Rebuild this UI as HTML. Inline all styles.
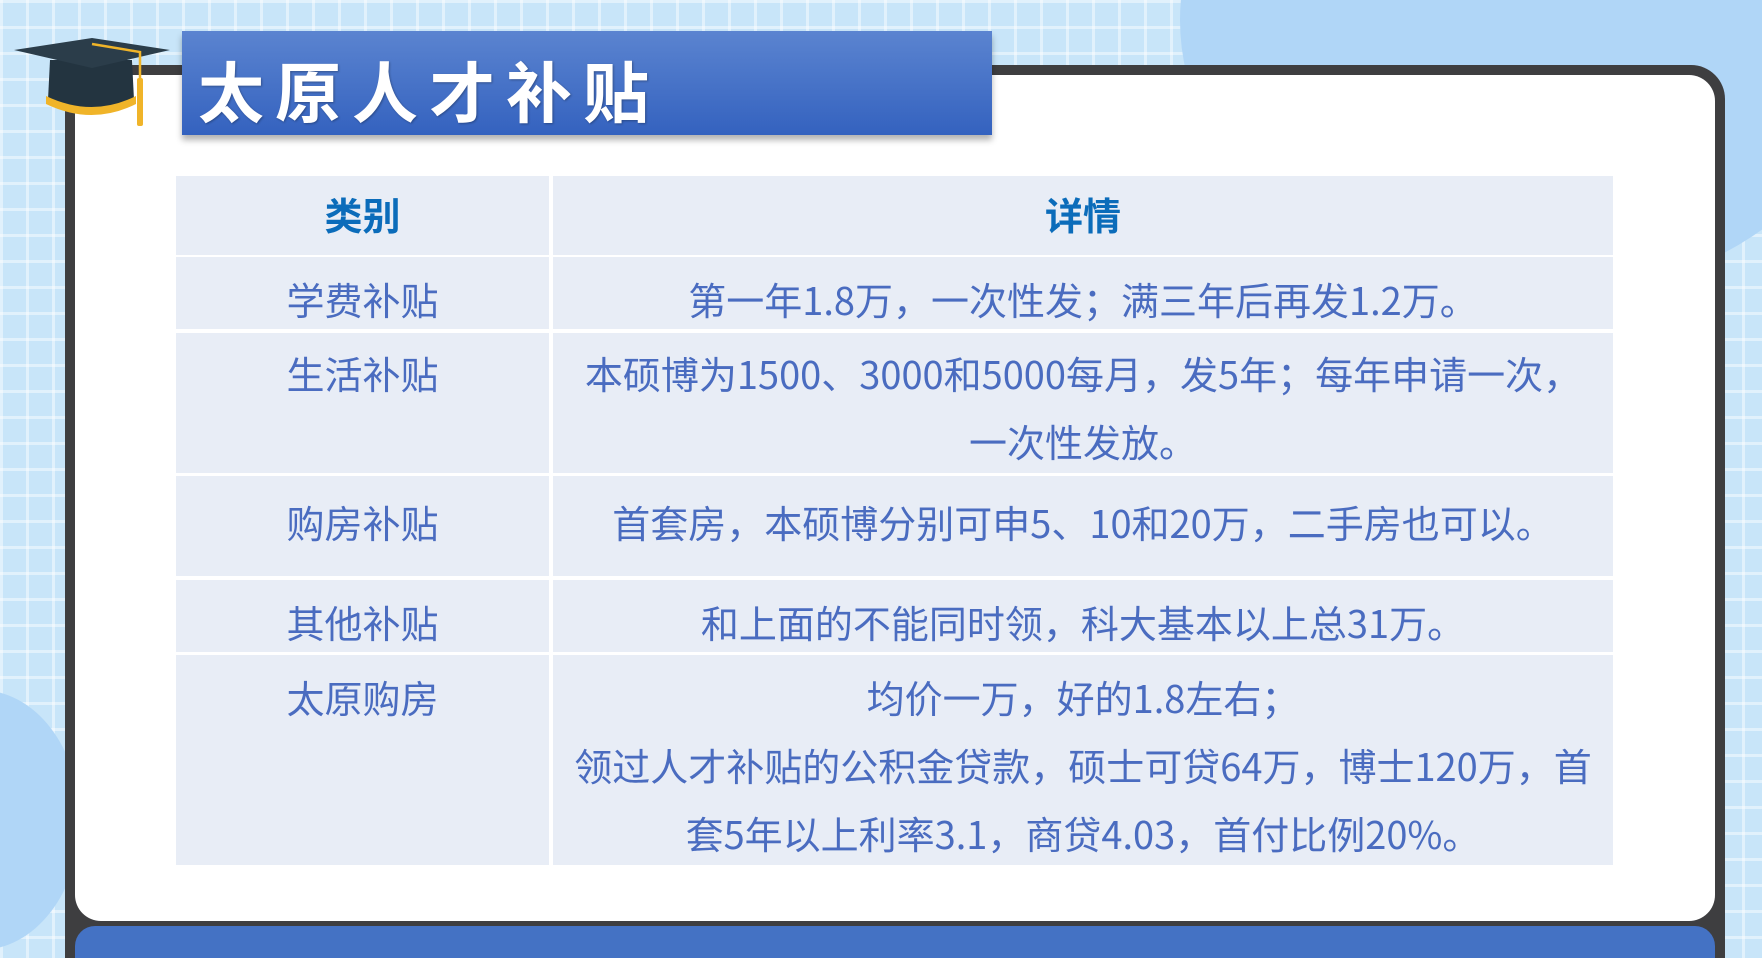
<!DOCTYPE html>
<html><head><meta charset="utf-8"><style>
*{margin:0;padding:0;box-sizing:border-box}
html{width:1762px;height:958px;overflow:hidden}
body{width:1762px;height:958px;overflow:hidden;position:relative;background:#c8e5f9;font-family:"Liberation Sans","Noto Sans CJK SC",sans-serif;
background-image:linear-gradient(rgba(255,255,255,.45) 3px,transparent 3px),linear-gradient(90deg,rgba(255,255,255,.45) 3px,transparent 3px);background-size:26px 26px}
.blob1{position:absolute;left:1180px;top:-260px;width:700px;height:560px;border-radius:50%;background:#b0d6f7}
.blob2{position:absolute;left:-120px;top:690px;width:200px;height:260px;border-radius:50%;background:#b0d6f7}
.card{position:absolute;left:65px;top:65px;width:1660px;height:893px;background:#3e3e40;border-radius:34px 34px 0 0}
.white{position:absolute;left:75px;top:75px;width:1640px;height:846px;background:#fff;border-radius:26px}
.band{position:absolute;left:75px;top:926px;width:1640px;height:40px;background:#4472c4;border-radius:20px 20px 0 0}
.banner{position:absolute;left:182px;top:31px;width:810px;height:104px;background:linear-gradient(#5b84d0,#3462bf);box-shadow:0 5px 6px rgba(0,0,0,.3)}
.banner span{position:absolute;left:16px;top:10px;color:#fff;font-size:66px;font-weight:bold;letter-spacing:11px;font-family:"Noto Sans CJK SC",sans-serif;text-shadow:1px 1px 2px rgba(0,0,0,.3)}
.cell{position:absolute;background:#e8edf6;display:flex;align-items:center;justify-content:center;text-align:center;color:#4a6cc0;font-size:38px;line-height:68px;font-family:"Noto Sans CJK SC",sans-serif}
.h{color:#0b6cba;font-weight:bold}
.top{align-items:flex-start}
</style></head><body>
<div class="blob1"></div><div class="blob2"></div>
<div class="card"></div><div class="white"></div><div class="band"></div>
<div class="banner"><span>太原人才补贴</span></div>
<svg style="position:absolute;left:12px;top:38px" width="160" height="92" viewBox="0 0 160 92">
<path d="M38 22 L36 62 Q80 82 122 62 L120 22 Z" fill="#233440"/>
<path d="M34 58 Q80 80 124 58 L124 66 Q80 88 34 66 Z" fill="#f0b429"/>
<path d="M2 12 L80 0 L158 12 L80 30 Z" fill="#2b3d4a"/>
<path d="M80 6 L128 14 L128 40" stroke="#f0b429" stroke-width="2.5" fill="none"/>
<rect x="125" y="40" width="6" height="48" rx="2" fill="#f0b429"/>
</svg>
<div class="cell h" style="left:176px;top:176px;width:373px;height:79px;padding-bottom:4px">类别</div>
<div class="cell h" style="left:553px;top:176px;width:1060px;height:79px;padding-bottom:4px">详情</div>
<div class="cell" style="left:176px;top:257px;width:373px;height:72px;padding-top:12px">学费补贴</div>
<div class="cell" style="left:553px;top:257px;width:1060px;height:72px;padding-top:12px">第一年1.8万，一次性发；满三年后再发1.2万。</div>
<div class="cell top" style="left:176px;top:333px;width:373px;height:140px;padding-top:6px">生活补贴</div>
<div class="cell top" style="left:553px;top:333px;width:1060px;height:140px;padding-top:6px">本硕博为1500、3000和5000每月，发5年；每年申请一次，<br>一次性发放。</div>
<div class="cell" style="left:176px;top:476px;width:373px;height:100px;padding-bottom:8px">购房补贴</div>
<div class="cell" style="left:553px;top:476px;width:1060px;height:100px;padding-bottom:8px">首套房，本硕博分别可申5、10和20万，二手房也可以。</div>
<div class="cell" style="left:176px;top:580px;width:373px;height:72px;padding-top:12px">其他补贴</div>
<div class="cell" style="left:553px;top:580px;width:1060px;height:72px;padding-top:12px">和上面的不能同时领，科大基本以上总31万。</div>
<div class="cell top" style="left:176px;top:655px;width:373px;height:210px;padding-top:8px">太原购房</div>
<div class="cell top" style="left:553px;top:655px;width:1060px;height:210px;padding-top:8px">均价一万，好的1.8左右；<br>领过人才补贴的公积金贷款，硕士可贷64万，博士120万，首<br>套5年以上利率3.1，商贷4.03，首付比例20%。</div>
</body></html>
